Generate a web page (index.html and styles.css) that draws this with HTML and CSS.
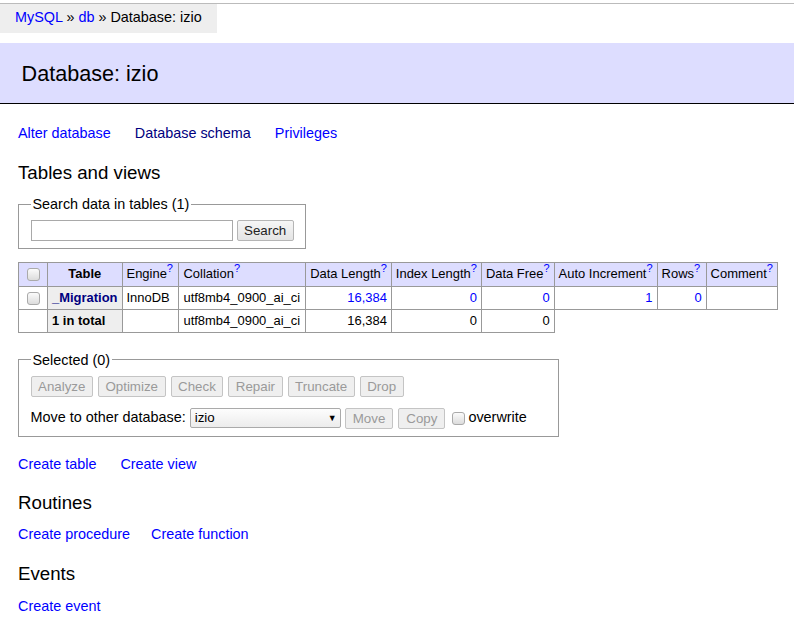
FILE: index.html
```html
<!DOCTYPE html>
<html lang="en">
<head>
    <meta charset="UTF-8">
    <title>Database: izio - Adminer</title>
    <link rel="stylesheet" href="styles.css">
</head>
<body>
    <div class="topline"></div>
    <p id="breadcrumb"><a href="#">MySQL</a> &raquo; <a href="#">db</a> &raquo; Database: izio</p>
    <div id="content">
        <h2>Database: izio</h2>
        <p class="links first"><a href="#">Alter database</a> <a href="#" class="visited">Database schema</a> <a href="#">Privileges</a></p>

        <h3 class="first">Tables and views</h3>
        <form class="search-form">
            <fieldset>
                <legend>Search data in tables (1)</legend>
                <input type="search" class="text-input"> <button type="button" class="btn">Search</button>
            </fieldset>
        </form>

        <form class="tables-form">
            <table class="tables">
                <thead>
                    <tr>
                        <td class="check"><input type="checkbox" class="box"></td>
                        <th>Table</th>
                        <td class="pad">Engine<sup><a href="#">?</a></sup></td>
                        <td class="pad">Collation<sup><a href="#">?</a></sup></td>
                        <td>Data Length<sup><a href="#">?</a></sup></td>
                        <td>Index Length<sup><a href="#">?</a></sup></td>
                        <td>Data Free<sup><a href="#">?</a></sup></td>
                        <td>Auto Increment<sup><a href="#">?</a></sup></td>
                        <td class="pad">Rows<sup><a href="#">?</a></sup></td>
                        <td>Comment<sup><a href="#">?</a></sup></td>
                    </tr>
                </thead>
                <tbody>
                    <tr>
                        <td class="check"><input type="checkbox" class="box"></td>
                        <th><a href="#" class="visited">_Migration</a></th>
                        <td>InnoDB</td>
                        <td class="pad">utf8mb4_0900_ai_ci</td>
                        <td class="num"><a href="#">16,384</a></td>
                        <td class="num"><a href="#">0</a></td>
                        <td class="num"><a href="#">0</a></td>
                        <td class="num"><a href="#">1</a></td>
                        <td class="num"><a href="#">0</a></td>
                        <td></td>
                    </tr>
                    <tr class="total">
                        <td></td>
                        <th>1 in total</th>
                        <td></td>
                        <td class="pad">utf8mb4_0900_ai_ci</td>
                        <td class="num">16,384</td>
                        <td class="num">0</td>
                        <td class="num">0</td>
                    </tr>
                </tbody>
            </table>

            <fieldset class="selected">
                <legend>Selected (0)</legend>
                <div>
                    <button type="button" class="btn" disabled>Analyze</button>
                    <button type="button" class="btn" disabled>Optimize</button>
                    <button type="button" class="btn" disabled>Check</button>
                    <button type="button" class="btn" disabled>Repair</button>
                    <button type="button" class="btn" disabled>Truncate</button>
                    <button type="button" class="btn" disabled>Drop</button>
                </div>
                <p class="move-row">Move to other database:
                    <span class="select">izio<span class="arrow">&#9660;</span></span>
                    <button type="button" class="btn wide" disabled>Move</button>
                    <button type="button" class="btn wide" disabled>Copy</button>
                    <label class="overwrite"><input type="checkbox" class="box">overwrite</label>
                </p>
            </fieldset>
        </form>

        <p class="links after-form"><a href="#">Create table</a> <a href="#">Create view</a></p>

        <h3>Routines</h3>
        <p class="links"><a href="#">Create procedure</a> <a href="#" class="tight">Create function</a></p>

        <h3 class="events">Events</h3>
        <p class="links"><a href="#">Create event</a></p>
    </div>
</body>
</html>
```

FILE: styles.css
```css
body {
    color: #000;
    background: #fff;
    font: 14.4px/1.25 "Liberation Sans", Arial, sans-serif;
    margin: 0;
}
a {
    color: #00f;
    text-decoration: none;
}
a.visited {
    color: #000080;
}
.topline {
    height: 3px;
    border-bottom: 1px solid #bbb;
}
#breadcrumb {
    display: inline-block;
    margin: 0;
    height: 29px;
    line-height: 26px;
    padding: 0 15px;
    background: #eee;
    white-space: nowrap;
}
#content {
    padding: 0 0 20px 18px;
}
h2 {
    font-size: 21.6px;
    font-weight: normal;
    line-height: 27px;
    margin: 10px 0 20px -18px;
    padding: 16.5px 21.6px;
    background: #ddf;
    border-bottom: 1px solid #000;
}
h3 {
    font-weight: normal;
    font-size: 18.7px;
    line-height: 1.25;
    margin: 18px 0 0;
}
h3.first,
h3.events {
    margin-top: 19px;
}
p {
    margin: 11.5px 20px 0 0;
}
.links {
    margin-top: 11px;
}
.links.first {
    margin-top: 0;
}
.links a {
    white-space: nowrap;
    margin-right: 20px;
}
.links a.tight {
    margin-left: -3px;
}
.links.after-form {
    margin-top: 18px;
}
form {
    margin: 0;
}
fieldset {
    display: inline-block;
    vertical-align: top;
    padding: 7px 11.5px 7px;
    margin: 11px 7px 0 0;
    border: 1px solid #999;
}
legend {
    padding: 0 2px;
}
.text-input {
    width: 202px;
    height: 21px;
    box-sizing: border-box;
    border: 1px solid #a9a9a9;
    margin: 0;
    padding: 1px 2px;
    font: 13.33px "Liberation Sans", Arial, sans-serif;
    vertical-align: middle;
}
.btn {
    font: 13.33px "Liberation Sans", Arial, sans-serif;
    color: #222;
    height: 21px;
    padding: 0 6.5px;
    margin: 0;
    border: 1px solid #b5b5b5;
    border-radius: 2px;
    background: linear-gradient(#f6f6f6, #e4e4e4);
    vertical-align: middle;
}
.btn:disabled {
    color: #9a9a9a;
    background: #efefef;
    border-color: #c4c4c4;
}
.btn.wide {
    padding: 0 7px;
}
.box {
    appearance: none;
    -webkit-appearance: none;
    width: 13px;
    height: 13px;
    margin: 0 4px;
    border: 1px solid #aaa;
    border-radius: 3px;
    background: linear-gradient(#fbfbfb, #dcdcdc);
    vertical-align: middle;
}
.tables {
    margin: 13px 20px 0 0;
    border-collapse: collapse;
    font-size: 12.96px;
    line-height: 1.25;
}
.tables td,
.tables th {
    border: 1px solid #999;
    padding: 3px 4px;
    text-align: left;
    white-space: nowrap;
}
.tables th {
    background: #eee;
}
.tables thead td,
.tables thead th {
    background: #ddf;
    padding: 3px 4px;
}
.tables thead th {
    text-align: center;
    padding: 3px 11px;
}
.tables td.pad {
    padding-right: 5px;
}
.tables thead td.pad {
    padding-right: 5.5px;
}
.tables td.check {
    padding: 3px 3.5px;
}
.tables td.num {
    text-align: right;
}
sup {
    font-size: 11px;
    line-height: 0;
    vertical-align: 6px;
}
.selected {
    box-sizing: border-box;
    width: 541px;
    margin-top: 18px;
}
.selected .btn {
    margin-right: 1px;
}
.move-row {
    margin: 11px 0 0;
    white-space: nowrap;
}
.select {
    display: inline-block;
    position: relative;
    box-sizing: border-box;
    width: 151px;
    height: 20px;
    line-height: 18px;
    padding: 0 4px;
    border: 1px solid #aaa;
    border-radius: 2px;
    background: linear-gradient(#fdfdfd, #ececec);
    font-size: 13.33px;
    vertical-align: middle;
}
.arrow {
    position: absolute;
    right: 3px;
    top: 0;
    font-size: 9px;
}
.overwrite {
    margin-left: 2px;
}
.overwrite .box {
    margin: 0 3px 0 0;
}
```
